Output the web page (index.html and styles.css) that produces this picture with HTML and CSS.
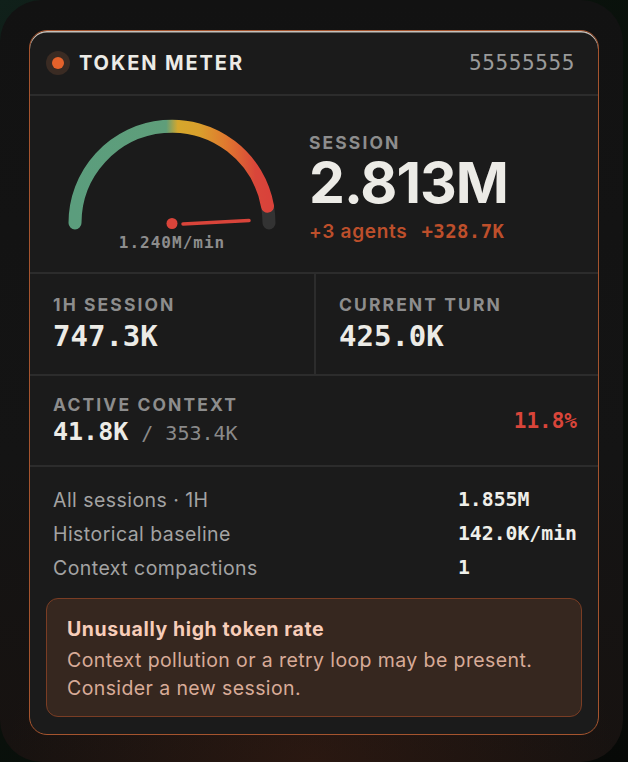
FILE: index.html
```html
<!DOCTYPE html>
<html lang="en">
<head>
<meta charset="utf-8">
<title>Token Meter</title>
<link rel="stylesheet" href="styles.css">
</head>
<body>
<div class="frame">
  <section class="card">
    <header class="head">
      <div class="brand"><span class="dot"></span><span class="title">TOKEN METER</span></div>
      <span class="code">55555555</span>
    </header>

    <div class="gauge-row">
      <svg class="gauge" width="240" height="178" viewBox="0 0 240 178">
        <defs>
          <linearGradient id="arcg" gradientUnits="userSpaceOnUse" x1="22" y1="0" x2="216" y2="0">
            <stop offset="0" stop-color="#5b9d7d"/>
            <stop offset="0.47" stop-color="#5f9e7a"/>
            <stop offset="0.53" stop-color="#d5a72c"/>
            <stop offset="0.64" stop-color="#d9a02c"/>
            <stop offset="0.78" stop-color="#e0782f"/>
            <stop offset="0.93" stop-color="#d9463a"/>
            <stop offset="1" stop-color="#d9423a"/>
          </linearGradient>
        </defs>
        <path d="M 214.5 110.2 A 97 97 0 0 1 216 127" fill="none" stroke="#333333" stroke-width="13" stroke-linecap="round"/>
        <path d="M 22 127 A 97 97 0 0 1 214.5 110.2" fill="none" stroke="url(#arcg)" stroke-width="13" stroke-linecap="round"/>
        <line x1="130" y1="128" x2="196" y2="124.5" stroke="#d9443a" stroke-width="3.5" stroke-linecap="round"/>
        <circle cx="119" cy="127.5" r="5.5" fill="#d9443a"/>
        <text class="rate" x="119" y="152" text-anchor="middle">1.240M/min</text>
      </svg>
      <div class="session">
        <div class="label">SESSION</div>
        <div class="big">2.813M</div>
        <div class="delta"><span class="agents">+3 agents</span><span class="plus">+328.7K</span></div>
      </div>
    </div>

    <div class="stats">
      <div class="stat">
        <div class="label">1H SESSION</div>
        <div class="val">747.3K</div>
      </div>
      <div class="stat stat-right">
        <div class="label">CURRENT TURN</div>
        <div class="val">425.0K</div>
      </div>
    </div>

    <div class="context">
      <div class="ctx-main">
        <div class="label">ACTIVE CONTEXT</div>
        <div class="ctx-val">41.8K<span class="ctx-max">/ 353.4K</span></div>
      </div>
      <div class="pct">11.8%</div>
    </div>

    <div class="list">
      <span class="k">All sessions · 1H</span><span class="v">1.855M</span>
      <span class="k">Historical baseline</span><span class="v">142.0K/min</span>
      <span class="k">Context compactions</span><span class="v">1</span>
    </div>

    <div class="alert">
      <div class="alert-title">Unusually high token rate</div>
      <div class="alert-body">Context pollution or a retry loop may be present.<br>Consider a new session.</div>
    </div>
  </section>
</div>
</body>
</html>
```

FILE: styles.css
```css
* { box-sizing: border-box; }

html, body {
  margin: 0;
  padding: 0;
}

body {
  width: 628px;
  height: 762px;
  overflow: hidden;
  background: linear-gradient(135deg, #10201a 0%, #0a120c 40%, #070907 100%);
  font-family: "Inter", "Noto Sans", sans-serif;
}

.frame {
  width: 623px;
  height: 762px;
  border-radius: 42px;
  padding: 30px 0 0 29px;
  background:
    radial-gradient(ellipse 70% 45% at 50% 100%, rgba(110, 45, 20, 0.22), rgba(0,0,0,0) 70%),
    linear-gradient(180deg, #121212 0%, #141414 60%, #171210 100%);
}

.card {
  width: 570px;
  height: 705px;
  border: 1.5px solid #a5542e;
  border-radius: 18px;
  background: #1b1b1b;
  box-shadow: inset 0 1.5px 0 rgba(240, 235, 228, 0.8);
  display: flex;
  flex-direction: column;
  overflow: hidden;
}

.head {
  height: 65px;
  flex: none;
  display: flex;
  align-items: center;
  justify-content: space-between;
  padding: 0 23px 0 16px;
  border-bottom: 2px solid #2c2c2c;
}

.brand {
  display: flex;
  align-items: center;
  gap: 9px;
}

.dot {
  width: 24px;
  height: 24px;
  border-radius: 50%;
  background: #3a2b23;
  display: flex;
  align-items: center;
  justify-content: center;
}

.dot::after {
  content: "";
  width: 12px;
  height: 12px;
  border-radius: 50%;
  background: #e5622b;
}

.title {
  color: #ecebe6;
  font-size: 20px;
  font-weight: 700;
  letter-spacing: 1.9px;
}

.code {
  color: #9a9a9a;
  font-family: "DejaVu Sans Mono", monospace;
  font-size: 21px;
  letter-spacing: 0.6px;
}

.gauge-row {
  height: 178px;
  flex: none;
  display: flex;
  align-items: flex-start;
  gap: 16px;
  padding: 0 23px;
  border-bottom: 2px solid #2c2c2c;
}

.gauge {
  flex: none;
  display: block;
}

.rate {
  font-family: "DejaVu Sans Mono", monospace;
  font-size: 16px;
  font-weight: 700;
  letter-spacing: 1px;
  fill: #8d8d8d;
}

.session {
  display: flex;
  flex-direction: column;
  padding-top: 36px;
}

.label {
  color: #8d8d8d;
  font-size: 17.5px;
  font-weight: 700;
  letter-spacing: 2.1px;
  line-height: 22px;
}

.big {
  color: #ecebe6;
  font-size: 57px;
  font-weight: 700;
  letter-spacing: -1px;
  line-height: 60px;
  margin-top: -1px;
}

.delta {
  display: flex;
  align-items: baseline;
  gap: 14px;
  line-height: 24px;
  margin-top: 6px;
}

.agents {
  color: #bd4f2b;
  font-size: 19px;
  font-weight: 600;
  letter-spacing: 0.7px;
}

.plus {
  color: #bd4f2b;
  font-family: "DejaVu Sans Mono", monospace;
  font-size: 19px;
  font-weight: 700;
  letter-spacing: 0.4px;
}

.stats {
  height: 102px;
  flex: none;
  display: grid;
  grid-template-columns: 1fr 1fr;
  border-bottom: 2px solid #2c2c2c;
}

.stat {
  padding: 20px 23px 0;
}

.stat-right {
  border-left: 2px solid #2c2c2c;
}

.val {
  color: #ecebe6;
  font-family: "DejaVu Sans Mono", monospace;
  font-size: 29px;
  font-weight: 700;
  line-height: 36px;
  margin-top: 2px;
}

.context {
  height: 91px;
  flex: none;
  display: flex;
  align-items: center;
  justify-content: space-between;
  padding: 0 21px 0 23px;
  border-bottom: 2px solid #2c2c2c;
}

.ctx-main {
  padding-top: 1px;
}

.ctx-val {
  color: #ecebe6;
  font-family: "DejaVu Sans Mono", monospace;
  font-size: 25px;
  font-weight: 700;
  line-height: 30px;
  margin-top: 1px;
}

.ctx-max {
  color: #8a8a8a;
  font-size: 20px;
  font-weight: 400;
  margin-left: 13px;
}

.pct {
  color: #d9453a;
  font-family: "DejaVu Sans Mono", monospace;
  font-size: 21px;
  font-weight: 700;
}

.list {
  display: grid;
  grid-template-columns: 1fr auto;
  padding: 16px 21px 0 23px;
}

.k {
  color: #a3a3a3;
  font-size: 19.5px;
  letter-spacing: 0.45px;
  line-height: 34px;
}

.v {
  color: #efefea;
  font-family: "DejaVu Sans Mono", monospace;
  font-size: 19.8px;
  font-weight: 700;
  line-height: 34px;
}

.alert {
  margin: 13px 16px 0;
  padding: 17px 20px 14px;
  border: 1.5px solid #7a3d24;
  border-radius: 12px;
  background: #36271f;
}

.alert-title {
  color: #f7cdb9;
  font-size: 19.5px;
  font-weight: 700;
  letter-spacing: 0.6px;
  line-height: 26px;
}

.alert-body {
  color: #d8ab98;
  font-size: 19.5px;
  letter-spacing: 0.4px;
  line-height: 28px;
  margin-top: 4px;
}
```
